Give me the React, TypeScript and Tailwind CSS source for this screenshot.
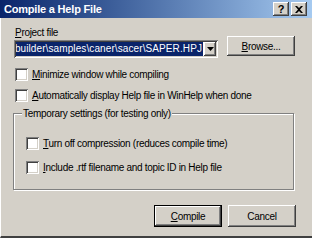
import React from 'react';

const raised =
  'shadow-[inset_-1px_-1px_#404040,inset_1px_1px_#ffffff,inset_-2px_-2px_#808080,inset_2px_2px_#d4d0c8]';
const sunken =
  'shadow-[inset_1px_1px_#808080,inset_-1px_-1px_#ffffff,inset_2px_2px_#404040,inset_-2px_-2px_#d4d0c8]';

const Check: React.FC<{ label: React.ReactNode; className?: string }> = ({ label, className }) => (
  <div className={`flex items-center h-[13px] ${className ?? ''}`}>
    <div className={`w-[13px] h-[13px] bg-white ${sunken}`} />
    <span className="ml-[4px] leading-[13px]">{label}</span>
  </div>
);

const TitleButton: React.FC<{ children: React.ReactNode }> = ({ children }) => (
  <div className={`w-[16px] h-[14px] bg-[#d4d0c8] flex items-center justify-center ${raised}`}>
    {children}
  </div>
);

const App: React.FC = () => {
  return (
    <div
      className="w-[312px] h-[238px] bg-[#d4d0c8] flex flex-col text-[10px] tracking-[-0.3px] text-black overflow-hidden"
      style={{ fontFamily: '"Liberation Sans", Arial, sans-serif' }}
    >
      {/* title bar */}
      <div className="h-[18px] shrink-0 flex items-center pl-[4px] pr-[5px] bg-gradient-to-r from-[#0a246a] to-[#a6caf0]">
        <span className="text-white font-bold text-[11px] tracking-[-0.2px] leading-none flex-1">Compile a Help File</span>
        <TitleButton>
          <span className="font-bold text-[11px] leading-none mt-[1px]">?</span>
        </TitleButton>
        <div className="ml-[2px]">
          <TitleButton>
            <svg width="8" height="7" viewBox="0 0 8 7">
              <path d="M0 0h2l2 2 2-2h2L5 3.5 8 7H6L4 5 2 7H0l3-3.5z" fill="#000" />
            </svg>
          </TitleButton>
        </div>
      </div>

      {/* body */}
      <div className="flex-1 flex flex-col border-l border-white border-b-2 border-b-[#404040] pl-[13px] pr-[17px]">
        <div className="mt-[8px] leading-[13px] pl-[1px]">
          <u>P</u>roject file
        </div>
        <div className="flex items-start mt-[-3px]">
          <div className={`w-[204px] h-[18px] mt-[4px] bg-white flex items-center p-[2px] ${sunken}`}>
            <div className="flex-1 h-[14px] overflow-hidden flex justify-end bg-[#0a246a] mr-[1px]">
              <span className="text-white whitespace-nowrap leading-[14px] px-[1px] tracking-[0.1px]">
                builder\samples\caner\sacer\SAPER.HPJ
              </span>
            </div>
            <div className={`w-[12px] h-[14px] bg-[#d4d0c8] flex items-center justify-center ${raised}`}>
              <svg width="7" height="4" viewBox="0 0 7 4">
                <path d="M0 0h7L3.5 4z" fill="#000" />
              </svg>
            </div>
          </div>
          <div className={`ml-auto w-[68px] h-[20px] flex items-center justify-center ${raised}`}>
            <span>
              <u>B</u>rowse...
            </span>
          </div>
        </div>

        <Check className="mt-[10px] ml-[1px]" label={<><u>M</u>inimize window while compiling</>} />
        <Check className="mt-[8px] ml-[1px]" label={<><u>A</u>utomatically display Help file in WinHelp when done</>} />

        <fieldset className="mt-[5px] mr-[1px] ml-[-1px] border border-[#808080] shadow-[inset_1px_1px_#ffffff,1px_1px_#ffffff] h-[83px]">
          <legend className="ml-[8px] px-[1px] leading-[13px] bg-[#d4d0c8]">Temporary settings (for testing only)</legend>
          <Check className="mt-[17px] ml-[12px]" label={<><u>T</u>urn off compression (reduces compile time)</>} />
          <Check className="mt-[11px] ml-[12px]" label={<><u>I</u>nclude .rtf filename and topic ID in Help file</>} />
        </fieldset>

        <div className="flex justify-end gap-[6px] mt-[15px] mr-[-1px]">
          <div className="border border-black">
            <div className={`w-[66px] h-[20px] flex items-center justify-center ${raised}`}>
              <span>
                <u>C</u>ompile
              </span>
            </div>
          </div>
          <div className={`w-[68px] h-[22px] flex items-center justify-center ${raised}`}>
            <span>Cancel</span>
          </div>
        </div>
      </div>
    </div>
  );
};

export default App;
